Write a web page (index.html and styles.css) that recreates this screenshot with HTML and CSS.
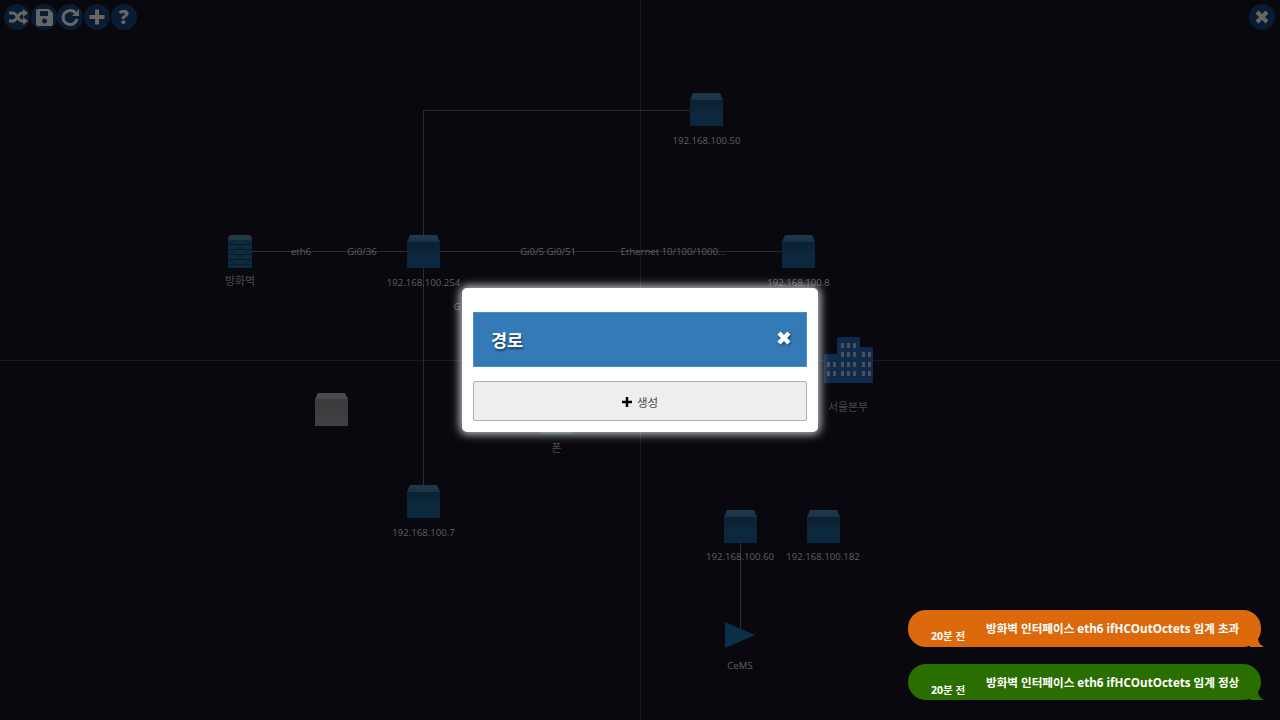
FILE: index.html
```html
<!DOCTYPE html>
<html lang="ko">
<head>
    <meta charset="UTF-8">
    <title>토폴로지</title>
    <link rel="stylesheet" href="styles.css">
</head>
<body>
    <!-- topology canvas -->
    <svg class="canvas" width="1280" height="720" viewBox="0 0 1280 720">
        <defs>
            <linearGradient id="boxFront" x1="0" y1="0" x2="0" y2="1">
                <stop offset="0" stop-color="#0c2030"/>
                <stop offset="0.5" stop-color="#0c283c"/>
                <stop offset="1" stop-color="#0a2740"/>
            </linearGradient>
            <linearGradient id="boxLid" x1="0" y1="0" x2="0" y2="1">
                <stop offset="0" stop-color="#21394a"/>
                <stop offset="1" stop-color="#183246"/>
            </linearGradient>
            <linearGradient id="greyFront" x1="0" y1="0" x2="0" y2="1">
                <stop offset="0" stop-color="#3a3a3d"/>
                <stop offset="1" stop-color="#414144"/>
            </linearGradient>
            <symbol id="box" viewBox="0 0 33 33">
                <path fill="url(#boxLid)" d="M3 0H30L33 7H0Z"/>
                <rect y="7" width="33" height="26" fill="url(#boxFront)"/>
            </symbol>
            <symbol id="box-grey" viewBox="0 0 33 33">
                <path fill="#4a4a4c" d="M3 0H30L33 6H0Z"/>
                <rect y="6" width="33" height="27" fill="url(#greyFront)"/>
            </symbol>
        </defs>

        <g class="guides">
            <path d="M640.5 0V720"/>
            <path d="M0 360.5H1280"/>
        </g>

        <g class="links">
            <path d="M690 110.5H423.5V502"/>
            <path d="M240 251.5H798"/>
            <path d="M740.5 527V635"/>
        </g>

        <!-- firewall -->
        <g>
            <path fill="#21394a" d="M230 235H250L252 238V242H228V238Z"/>
            <rect x="228" y="240" width="24" height="28" rx="1" fill="#0e2a3e"/>
            <path class="bricks" d="M228 244.5H252M228 249.5H252M228 254.5H252M228 259.5H252M228 264.5H252M234 240V244M246 240V244M240 245V249M234 250V254M246 250V254M240 255V259M234 260V264M246 260V264"/>
        </g>

        <use href="#box" x="690" y="93" width="33" height="33"/>
        <use href="#box" x="407" y="235" width="33" height="33"/>
        <use href="#box" x="782" y="235" width="33" height="33"/>
        <use href="#box" x="407" y="485" width="33" height="33"/>
        <use href="#box" x="724" y="510" width="33" height="33"/>
        <use href="#box" x="807" y="510" width="33" height="33"/>
        <use href="#box" x="540" y="401" width="33" height="33"/>
        <use href="#box-grey" x="315" y="393" width="33" height="33"/>

        <!-- building -->
        <g>
            <path fill="#0f2b4b" d="M824 383V356Q824 354 826 354H837V339Q837 337 839 337H858Q860 337 860 339V347H871Q873 347 873 349V383Z"/>
            <path class="windows" d="M841 343h3v5h-3zM847 343h3v5h-3zM853 343h3v5h-3zM841 352h3v5h-3zM847 352h3v5h-3zM853 352h3v5h-3zM862 352h3v5h-3zM868 352h3v5h-3zM827 362h3v5h-3zM833 362h3v5h-3zM841 362h3v5h-3zM847 362h3v5h-3zM853 362h3v5h-3zM862 362h3v5h-3zM868 362h3v5h-3zM827 371h3v5h-3zM833 371h3v5h-3zM841 371h3v5h-3zM847 371h3v5h-3zM853 371h3v5h-3zM862 371h3v5h-3zM868 371h3v5h-3z"/>
        </g>

        <!-- CeMS -->
        <path fill="#083049" d="M725 622L755 635L725 648Z"/>

        <g class="labels">
            <text x="706.500" y="144">192.168.100.50</text>
            <text class="label-ko" x="240" y="285">방화벽</text>
            <text x="423.500" y="286">192.168.100.254</text>
            <text x="798.500" y="286">192.168.100.8</text>
            <text x="457" y="310">G</text>
            <text class="label-ko" x="848" y="411">서울본부</text>
            <text class="label-ko" x="556.500" y="452">폰</text>
            <text x="423.500" y="536">192.168.100.7</text>
            <text x="740" y="560">192.168.100.60</text>
            <text x="823" y="560">192.168.100.182</text>
            <text x="740" y="669">CeMS</text>
        </g>
        <g class="labels">
            <text x="301" y="255">eth6</text>
            <text x="362" y="255">Gi0/36</text>
            <text x="548" y="255">Gi0/5 Gi0/51</text>
            <text x="673" y="255">Ethernet 10/100/1000...</text>
        </g>
    </svg>

    <div class="toolbar">
        <button class="tool-btn" title="shuffle">
            <svg viewBox="0 0 26 26"><path class="tool-line" d="M5 9H9C13 9 14 17 18 17H20M5 17H9C13 17 14 9 18 9H20"/><path class="tool-fill" d="M19 5L24 9L19 13ZM19 13L24 17L19 21Z"/></svg>
        </button>
        <button class="tool-btn" title="save">
            <svg viewBox="0 0 26 26"><path class="tool-fill" fill-rule="evenodd" d="M7 5H18L22 9V20Q22 22 20 22H7Q5 22 5 20V7Q5 5 7 5ZM9 7V12H17V7ZM13.500 14.500A2.500 2.500 0 1 0 13.510 14.500Z"/></svg>
        </button>
        <button class="tool-btn" title="refresh">
            <svg viewBox="0 0 26 26"><path class="tool-line" d="M19 9.500A7 7 0 1 0 20 15"/><path class="tool-fill" d="M22 5V12H15Z"/></svg>
        </button>
        <button class="tool-btn" title="add">
            <svg viewBox="0 0 26 26"><path class="tool-line tool-thick" d="M13 5.500V20.500M5.500 13H20.500"/></svg>
        </button>
        <button class="tool-btn tool-help" title="help">?</button>
    </div>

    <button class="tool-btn tool-close" title="close">
        <svg viewBox="0 0 26 26"><path class="tool-line tool-thick" d="M8 8L18 18M18 8L8 18"/></svg>
    </button>

    <div class="modal-wrap">
        <div class="modal">
            <div class="modal-header">
                <h4 class="modal-title">경로</h4>
                <svg class="modal-close" viewBox="0 0 14 14"><path d="M2 2L12 12M12 2L2 12"/></svg>
            </div>
            <button class="create-btn">
                <svg class="create-plus" viewBox="0 0 10 10"><path d="M5 0V10M0 5H10"/></svg>
                <span>생성</span>
            </button>
        </div>
    </div>

    <div class="toasts">
        <div class="toast toast-warn">
            <span class="toast-time">20분 전</span>
            <span class="toast-msg">방화벽 인터페이스 eth6 ifHCOutOctets 임계 초과</span>
        </div>
        <div class="toast toast-ok">
            <span class="toast-time">20분 전</span>
            <span class="toast-msg">방화벽 인터페이스 eth6 ifHCOutOctets 임계 정상</span>
        </div>
    </div>
</body>
</html>
```

FILE: styles.css
```css
* {
    box-sizing: border-box;
}

html,
body {
    height: 100%;
}

body {
    margin: 0;
    overflow: hidden;
    background-color: #08080e;
    font-family: "Open Sans", "Noto Sans CJK KR", sans-serif;
    color: #555;
}

.canvas {
    position: absolute;
    top: 0;
    left: 0;
}

.guides path {
    fill: none;
    stroke: #1a1a20;
}

.links path {
    fill: none;
    stroke: #2c2c30;
}

.bricks {
    fill: none;
    stroke: #0a1c2a;
}

.windows {
    fill: #505054;
}

.labels text {
    font-size: 9.600px;
    fill: #606060;
    text-anchor: middle;
}

.labels .label-ko {
    font-size: 10.900px;
    fill: #4a4a4a;
}

.toolbar {
    position: absolute;
    top: 4px;
    left: 4px;
    display: flex;
    gap: 0.7px;
}

.tool-btn {
    width: 26px;
    height: 26px;
    padding: 0;
    border: none;
    border-radius: 50%;
    background-color: #0a1c32;
}

.tool-btn svg {
    display: block;
    width: 26px;
    height: 26px;
}

.tool-line {
    fill: none;
    stroke: #666;
    stroke-width: 3;
}

.tool-thick {
    stroke-width: 4;
}

.tool-fill {
    fill: #666;
}

.tool-help {
    font-family: "Open Sans", sans-serif;
    font-size: 20px;
    font-weight: 800;
    line-height: 26px;
    color: #666;
}

.tool-close {
    position: absolute;
    top: 4px;
    right: 5px;
}

.modal-wrap {
    position: absolute;
    top: 0;
    left: 0;
    width: 100%;
    height: 100%;
    display: flex;
    align-items: center;
    justify-content: center;
}

.modal {
    width: 356px;
    padding: 24px 11px 11px;
    border-radius: 5px;
    background-color: #fff;
    box-shadow: 0 0 10px 2px rgba(255, 255, 255, 0.8);
}

.modal-header {
    display: flex;
    align-items: center;
    justify-content: space-between;
    height: 55px;
    padding: 0 15px 0 17px;
    margin-bottom: 14px;
    border: 1px solid #4a8fc8;
    background-color: #337ab7;
}

.modal-title {
    margin: 0;
    font-size: 17.500px;
    font-weight: 700;
    color: #fff;
    text-shadow: 1px 2px 2px rgba(0, 0, 0, 0.5);
}

.modal-close {
    width: 14px;
    height: 14px;
    margin-top: -4px;
    filter: drop-shadow(1px 1px 1px rgba(0, 0, 0, 0.5));
}

.modal-close path {
    fill: none;
    stroke: #fff;
    stroke-width: 4.500;
}

.create-btn {
    display: flex;
    align-items: center;
    justify-content: center;
    gap: 5px;
    width: 100%;
    height: 40px;
    padding: 1px 0 0;
    border: 1px solid #adadad;
    border-radius: 2px;
    background-color: #eee;
    font-family: inherit;
    font-size: 11.500px;
    color: #4a4a4a;
}

.create-plus {
    width: 10px;
    height: 10px;
}

.create-plus path {
    fill: none;
    stroke: #000;
    stroke-width: 2.500;
}

.toasts {
    position: absolute;
    right: 19px;
    bottom: 20px;
    display: flex;
    flex-direction: column;
    gap: 17px;
    width: 353px;
}

.toast {
    position: relative;
    display: flex;
    height: 37px;
    padding: 13px 0 0 23px;
    border-radius: 18px;
    color: #fff;
    font-weight: 700;
    white-space: nowrap;
}

.toast::after {
    content: "";
    position: absolute;
    right: -3px;
    bottom: 0;
    width: 14px;
    height: 10px;
    clip-path: polygon(0 0, 50% 0, 70% 70%, 100% 100%, 0 100%);
    background-color: inherit;
}

.toast-warn {
    background-color: #dc6a0d;
}

.toast-ok {
    height: 36px;
    background-color: #2a6e00;
}

.toast-time {
    width: 55px;
    padding-top: 5px;
    font-size: 10.500px;
    line-height: 16px;
}

.toast-msg {
    font-size: 11.600px;
    line-height: 14px;
    margin-top: -1px;
}
```
